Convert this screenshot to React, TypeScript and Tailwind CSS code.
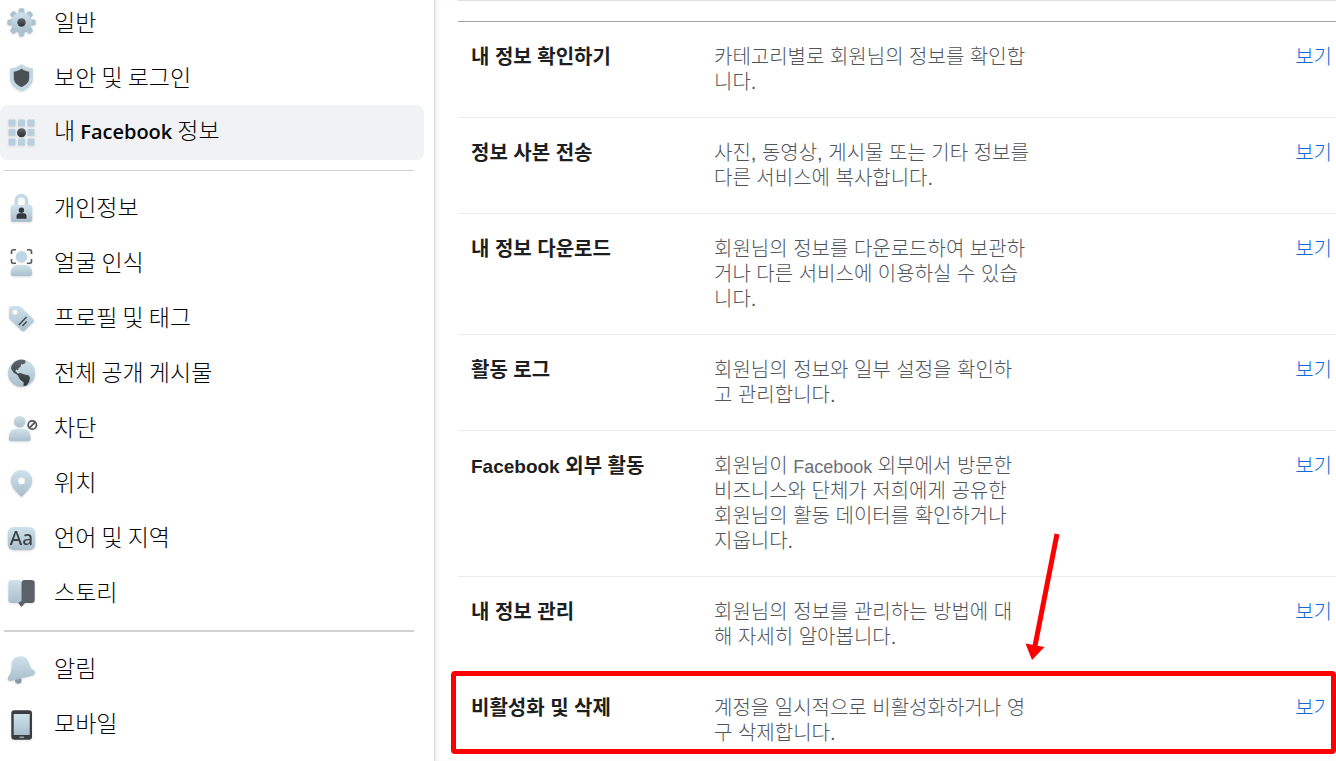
import type { ReactNode } from 'react'

type NavItem = { label: ReactNode; icon: ReactNode; active?: boolean }
type InfoRow = { title: ReactNode; lines: ReactNode[]; marked?: boolean }

const LIGHT = 'url(#icon-light)'
const DARK = 'url(#icon-dark)'

function Icon({ children }: { children: ReactNode }) {
  return (
    <svg viewBox="0 0 32 32" className="size-8 shrink-0 overflow-visible drop-shadow-[0_1px_1px_rgba(0,0,0,0.1)]" aria-hidden="true">
      {children}
    </svg>
  )
}

function IconGradients() {
  return (
    <svg className="absolute size-0" aria-hidden="true">
      <defs>
        <linearGradient id="icon-light" x1="0" y1="0" x2="0" y2="1">
          <stop offset="0" stopColor="#cfe2eb" />
          <stop offset="1" stopColor="#a9bfcb" />
        </linearGradient>
        <linearGradient id="icon-dark" x1="0" y1="0" x2="0" y2="1">
          <stop offset="0" stopColor="#5f666c" />
          <stop offset="1" stopColor="#2f3337" />
        </linearGradient>
      </defs>
    </svg>
  )
}

const GEAR_ANGLES = [0, 45, 90, 135, 180, 225, 270, 315]
const GRID_STEPS = [2.5, 12, 21.5]

const gear = (
  <Icon>
    {GEAR_ANGLES.map((angle) => (
      <path key={angle} d="M12 7 L12.8 2.4 Q13 1.3 14.2 1.3 H16.8 Q18 1.3 18.2 2.4 L19 7 Z" fill="#abc3cf" transform={`rotate(${angle} 15.5 15.5)`} />
    ))}
    <circle cx="15.5" cy="15.5" r="10.3" fill={LIGHT} />
    <circle cx="15.5" cy="15.5" r="4.2" fill={DARK} />
  </Icon>
)

const shield = (
  <Icon>
    <path d="M15.5 2 C18.5 4.5 22.5 6 27 6.5 V16 C27 22.5 22.5 27 15.5 29.5 C8.5 27 4 22.5 4 16 V6.5 C8.5 6 12.5 4.5 15.5 2 Z" fill="#c1d7e2" />
    <path d="M15.5 6.5 C17.5 8.2 20 9.3 23.2 9.7 V16 C23.2 20 20.5 23 15.5 25 C10.5 23 7.8 20 7.8 16 V9.7 C11 9.3 13.5 8.2 15.5 6.5 Z" fill="#4a5056" />
  </Icon>
)

const grid = (
  <Icon>
    {GRID_STEPS.map((y) =>
      GRID_STEPS.map((x) => <rect key={`${x}-${y}`} x={x} y={y} width="7" height="7" rx="0.8" fill="#b8d0dc" />),
    )}
    <circle cx="15.5" cy="15.7" r="4.5" fill={DARK} />
  </Icon>
)

const lock = (
  <Icon>
    <path d="M10.2 14 V8.5 A5.2 5.2 0 0 1 20.6 8.5 V14" fill="none" stroke="#c3d9e4" strokeWidth="3.2" />
    <rect x="4.7" y="13" width="21.6" height="17" rx="2.5" fill={LIGHT} />
    <circle cx="15.4" cy="18.3" r="2.7" fill="#33373b" />
    <path d="M10.5 26.8 V24.5 Q10.5 21.3 13.5 21.3 H17.5 Q20.5 21.3 20.5 24.5 V26.8 Z" fill="#33373b" />
  </Icon>
)

const face = (
  <Icon>
    <path d="M5.5 7 V4.5 Q5.5 2.8 7.2 2.8 H10 M21 2.8 H23.8 Q25.5 2.8 25.5 4.5 V7 M5.5 12 V14.5 Q5.5 16.2 7.2 16.2 H10 M21 16.2 H23.8 Q25.5 16.2 25.5 14.5 V12" fill="none" stroke="#555c62" strokeWidth="1.6" />
    <circle cx="15.5" cy="9.7" r="5.7" fill="#bcd7e3" />
    <path d="M4.7 26.5 Q4.7 18 12.5 18 H18.5 Q26.3 18 26.3 26.5 Q26.3 29.3 23.5 29.3 H7.5 Q4.7 29.3 4.7 26.5 Z" fill={LIGHT} />
  </Icon>
)

const tag = (
  <Icon>
    <path d="M3 6.5 Q3 4.3 5.2 4.2 L12.5 4 Q14 4 15 5 L27.5 17.2 Q29 18.7 27.5 20.3 L18.7 28.7 Q17 30 15.5 28.5 L4 17.5 Q3 16.5 3 15 Z" fill={LIGHT} />
    <circle cx="9" cy="10.3" r="2.4" fill="#fff" />
    <path d="M12.8 23 L20.5 15 M16.5 24 L20.7 19.5" stroke="#484e53" strokeWidth="1.5" />
  </Icon>
)

const globe = (
  <Icon>
    <circle cx="15.5" cy="16.2" r="13.7" fill={LIGHT} />
    <path d="M5 11.5 C5.5 6.5 10.5 2.7 15.5 2.6 L19.3 3.2 L19.5 6 L17 7.2 L15 7.3 L14.5 10 L12.5 11 L12.3 13 L10 12.5 L9.5 14.5 L12 16.5 L14.5 16 L18.5 17.5 L23 18.5 L24 21 L23 25 L20.5 28.5 L17.5 29 L17.7 25.5 L14 22.5 L11.5 18 L7.5 15.5 Z" fill={DARK} />
  </Icon>
)

const blocked = (
  <Icon>
    <circle cx="13.7" cy="9.7" r="5.8" fill={LIGHT} />
    <path d="M2.7 26.5 Q2.7 17 10 17 H17.5 Q24.7 17 24.7 26.5 Q24.7 29.3 22 29.3 H5.5 Q2.7 29.3 2.7 26.5 Z" fill={LIGHT} />
    <circle cx="26.3" cy="13" r="4.2" fill="none" stroke="#50565e" strokeWidth="1.7" />
    <path d="M23.5 15.8 L29.1 10.2" stroke="#50565e" strokeWidth="1.7" />
  </Icon>
)

const pin = (
  <Icon>
    <path fillRule="evenodd" d="M15.5 3 C21.5 3 26.3 7.8 26.3 13.7 C26.3 20 20 25.5 16.7 29.1 Q15.5 30.3 14.3 29.1 C11 25.5 4.7 20 4.7 13.7 C4.7 7.8 9.5 3 15.5 3 Z M15.5 10.2 A3.5 3.5 0 1 0 15.5 17.2 A3.5 3.5 0 1 0 15.5 10.2 Z" fill={LIGHT} />
  </Icon>
)

const language = (
  <Icon>
    <rect x="1.7" y="5" width="27.6" height="23.3" rx="6" fill={LIGHT} />
    <text x="15.5" y="23" textAnchor="middle" className="fill-[#3c4247] font-['Noto_Sans',sans-serif] text-[19px] font-medium">
      Aa
    </text>
  </Icon>
)

const story = (
  <Icon>
    <path d="M5.5 3 H12.5 Q15.5 3 15.5 6 V26 H5.5 Q2.3 26 2.3 22.8 V6.2 Q2.3 3 5.5 3 Z" fill={LIGHT} />
    <path d="M15.5 6 Q15.5 3 18.5 3 H25.5 Q28.7 3 28.7 6.2 V22.8 Q28.7 26 25.5 26 H19.5 Q18.5 26 18 27 L15.5 30 L13 27 Q12.6 26 12 26 L15.5 24 Z" fill="#5b6168" />
  </Icon>
)

const bell = (
  <Icon>
    <circle cx="12.3" cy="27.5" r="3.3" fill="#8699a4" />
    <path d="M5.5 12 C5.5 6.5 9.5 3.3 14.5 3.3 C19.5 3.3 22.3 6.5 23.3 10.5 C24 13.5 24.7 15.5 27.8 17.3 C30 18.6 29.5 21.5 27 22.5 L5 28 C2 28.5 0.7 25.5 2.5 23.3 C5.5 19.5 5.5 16 5.5 12 Z" fill={LIGHT} />
  </Icon>
)

const phone = (
  <Icon>
    <rect x="5.3" y="2.3" width="20.7" height="29.5" rx="3" fill="#393e43" />
    <rect x="7.7" y="6" width="16" height="21" fill={LIGHT} />
    <rect x="13.2" y="28.5" width="5" height="1.5" rx="0.7" fill="#9aa5ac" />
  </Icon>
)

const NAV_GROUPS: NavItem[][] = [
  [
    { label: '일반', icon: gear },
    { label: '보안 및 로그인', icon: shield },
    {
      label: (
        <>
          내 <span className="font-['Open_Sans',sans-serif] text-[20px] font-semibold">Facebook</span> 정보
        </>
      ),
      icon: grid,
      active: true,
    },
  ],
  [
    { label: '개인정보', icon: lock },
    { label: '얼굴 인식', icon: face },
    { label: '프로필 및 태그', icon: tag },
    { label: '전체 공개 게시물', icon: globe },
    { label: '차단', icon: blocked },
    { label: '위치', icon: pin },
    { label: '언어 및 지역', icon: language },
    { label: '스토리', icon: story },
  ],
  [
    { label: '알림', icon: bell },
    { label: '모바일', icon: phone },
  ],
]

const INFO_ROWS: InfoRow[] = [
  { title: '내 정보 확인하기', lines: ['카테고리별로 회원님의 정보를 확인합', '니다.'] },
  { title: '정보 사본 전송', lines: ['사진, 동영상, 게시물 또는 기타 정보를', '다른 서비스에 복사합니다.'] },
  { title: '내 정보 다운로드', lines: ['회원님의 정보를 다운로드하여 보관하', '거나 다른 서비스에 이용하실 수 있습', '니다.'] },
  { title: '활동 로그', lines: ['회원님의 정보와 일부 설정을 확인하', '고 관리합니다.'] },
  {
    title: (
      <>
        <span className="text-[19px] leading-none">Facebook</span> 외부 활동
      </>
    ),
    lines: [
      <>
        회원님이 <span className="text-lg leading-none text-[#6b7179]">Facebook</span> 외부에서 방문한
      </>,
      '비즈니스와 단체가 저희에게 공유한',
      '회원님의 활동 데이터를 확인하거나',
      '지웁니다.',
    ],
  },
  { title: '내 정보 관리', lines: ['회원님의 정보를 관리하는 방법에 대', '해 자세히 알아봅니다.'] },
  { title: '비활성화 및 삭제', lines: ['계정을 일시적으로 비활성화하거나 영', '구 삭제합니다.'], marked: true },
]

const DIVIDERS = ['', 'before:h-px', 'before:h-0.5']

function Sidebar() {
  return (
    <nav className="-mt-[5px] w-[434px] shrink-0 font-['Noto_Sans_CJK_KR',sans-serif] text-[23px] font-light text-[#050505]">
      {NAV_GROUPS.map((group, i) => (
        <ul
          key={i}
          className={i === 0 ? '' : `pt-[10px] before:mr-5 before:mb-[9px] before:ml-1 before:block before:bg-[#ced0d4] ${DIVIDERS[i]}`}
        >
          {group.map((item, j) => (
            <li key={j} className="pr-[10px]">
              <a
                href="#"
                aria-current={item.active ? 'page' : undefined}
                className={`flex h-[55px] items-center gap-4 rounded-lg pl-1.5 ${item.active ? 'bg-[#f0f2f5]' : ''}`}
              >
                {item.icon}
                <span className="pb-1 leading-8">{item.label}</span>
              </a>
            </li>
          ))}
        </ul>
      ))}
    </nav>
  )
}

function Callout() {
  return (
    <>
      <div className="pointer-events-none absolute -top-0.5 right-0 -left-[7px] h-[83px] rounded-sm border-5 border-[#f00] shadow-[inset_-5px_0_0_#fff]" />
      <svg viewBox="0 0 38 129" className="pointer-events-none absolute -top-[141px] left-[566px] h-[129px] w-[38px]" aria-hidden="true">
        <path d="M33 2 L11 114" stroke="#f00" strokeWidth="5" />
        <path d="M1.5 111.5 L20.5 115 L8 128 Z" fill="#f00" />
      </svg>
    </>
  )
}

function InfoList() {
  return (
    <ul className="mt-5 border-t border-[#a0a2a4]">
      {INFO_ROWS.map((row, i) => (
        <li key={i} className="relative flex border-b border-[#e9eaeb] pt-[23px] pr-1 pb-[22px] pl-[13px] text-xl leading-[25px] last:border-b-0">
          <h3 className="w-[243px] shrink-0 font-bold text-[#1c1e21]">{row.title}</h3>
          <p className="flex-1 font-light text-[#50555c]">
            {row.lines.map((line, j) => (
              <span key={j} className="block whitespace-nowrap">
                {line}
              </span>
            ))}
          </p>
          <a href="#" className="shrink-0 font-light text-[#1468d8]">
            보기
          </a>
          {row.marked && <Callout />}
        </li>
      ))}
    </ul>
  )
}

export default function App() {
  return (
    <div className="flex h-screen overflow-hidden bg-white">
      <IconGradients />
      <Sidebar />
      <main className="min-w-0 flex-1 border-l border-[#dcdddf] pl-[23px] font-['Liberation_Sans','Noto_Sans_CJK_KR',sans-serif] shadow-[inset_4px_0_4px_-2px_rgba(0,0,0,0.08)]">
        <div className="border-t border-[#dddfe2]" />
        <InfoList />
      </main>
    </div>
  )
}
